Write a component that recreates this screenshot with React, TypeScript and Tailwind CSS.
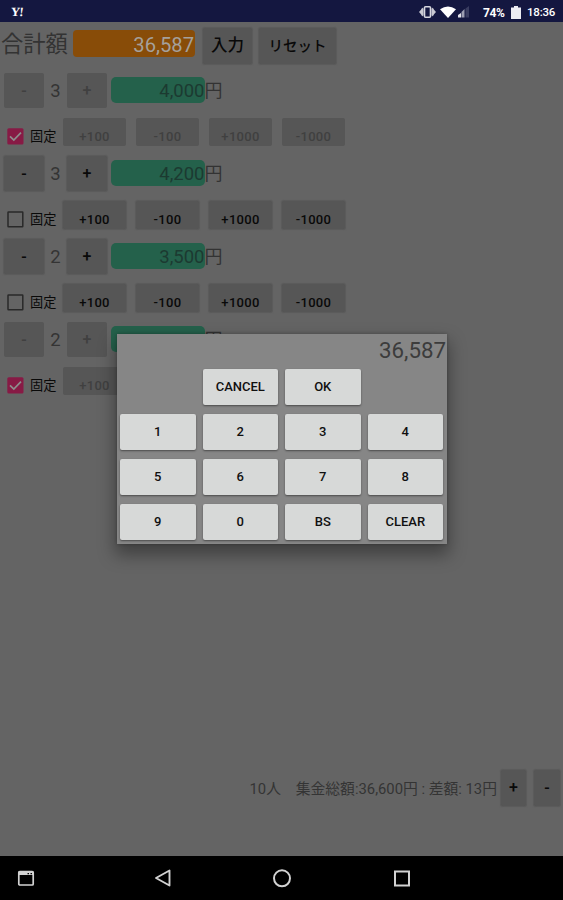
import React from 'react';
import clsx from 'clsx';

const steps = ['+100', '-100', '+1000', '-1000'];

const members = [
  { id: 1, count: 3, amount: '4,000', fixed: true, steps },
  { id: 2, count: 3, amount: '4,200', fixed: false, steps },
  { id: 3, count: 2, amount: '3,500', fixed: false, steps },
  { id: 4, count: 2, amount: '', fixed: true, steps: ['+100'] },
];

const keys = ['', 'CANCEL', 'OK', '', '1', '2', '3', '4', '5', '6', '7', '8', '9', '0', 'BS', 'CLEAR'];

function StatusBar() {
  return (
    <header className="flex h-[22px] shrink-0 items-center bg-[#141740] pl-[11px] pr-[7px] text-white">
      <span className="w-[16px] -skew-x-6 pt-[2px] font-['Liberation_Serif',serif] text-[12.5px] leading-none font-bold tracking-[-0.5px]">Y!</span>
      <svg className="ml-auto mt-[2px]" width="50" height="14" viewBox="0 0 50 14">
        <path d="M0 7l4-4.500v9zM17 7l-4-4.500v9z" fill="#c9c9d2" />
        <path d="M2.500 3.500h2v7h-2zM12.500 3.500h2v7h-2z" fill="#c9c9d2" />
        <rect x="5.500" y="1.800" width="6" height="10.400" rx="1" fill="none" stroke="#d8d8e0" strokeWidth="1.600" />
        <path d="M21 4.200Q29 -1 37 4.200L29 13z" fill="#fff" />
        <path d="M39 12.500V10l3-2v4.500z" fill="#e3e3ea" />
        <path d="M42.500 12.500V7l3-3v8.500z" fill="#9c9eb2" />
        <path d="M46.500 12.500V3.500L50 1v11.500z" fill="#393c60" />
      </svg>
      <span className="ml-[14px] mt-[3px] w-[23px] text-[12px] leading-none font-bold tracking-[-0.4px]">74%</span>
      <svg className="ml-[5px] mt-[2px]" width="10" height="13" viewBox="0 0 10 13">
        <path d="M3 0h4v1.500h3V13H0V1.500h3z" fill="#ececf2" />
      </svg>
      <span className="ml-[6px] mt-[3px] w-[29px] text-[11.500px] leading-none font-medium tracking-[-0.2px]">18:36</span>
    </header>
  );
}

function GrayButton({ className, disabled, children }: { className?: string; disabled?: boolean; children: React.ReactNode }) {
  return (
    <button
      disabled={disabled}
      className={clsx(
        'flex shrink-0 items-center justify-center rounded-[2px] bg-[#565656] font-medium',
        disabled ? 'text-[#404040]' : 'text-[#090909] shadow-[0_0_1px_0.5px_#5a5a5a]',
        className
      )}
    >
      {children}
    </button>
  );
}

function Checkbox({ checked }: { checked: boolean }) {
  return (
    <svg className="shrink-0" width="17" height="17" viewBox="0 0 17 17">
      {checked ? (
        <>
          <rect x="0.300" y="0.300" width="16.200" height="16.200" rx="1.500" fill="#871a45" />
          <path d="M3 8.300l3.800 3.800 7.200-7.400" fill="none" stroke="#8d8d8d" strokeWidth="1.700" />
        </>
      ) : (
        <rect x="1" y="1" width="14.800" height="14.800" rx="0.500" fill="none" stroke="#292929" strokeWidth="1.500" />
      )}
    </svg>
  );
}

function MemberRow({ count, amount, fixed, steps }: { count: number; amount: string; fixed: boolean; steps: string[] }) {
  return (
    <div className="h-[83px] shrink-0 pt-[5px]">
      <div className="flex h-[35px] items-center pl-[4px]">
        <GrayButton disabled={fixed} className="h-[35px] w-[40px] text-[16px]">-</GrayButton>
        <span className="w-[23px] pt-[2px] text-center text-[18.5px] leading-none text-[#343434]">{count}</span>
        <GrayButton disabled={fixed} className="h-[35px] w-[40px] pt-[1px] text-[16px]">+</GrayButton>
        <span className="mb-[1px] ml-[4px] flex h-[26px] w-[93.5px] items-center justify-end rounded-[5px] bg-[#24614b] pt-[3px] text-[18.5px] leading-none text-[#1c3a31]">
          {amount}
        </span>
        <span className="text-[18px] leading-none text-[#333]">円</span>
      </div>
      <div className="mt-[10px] flex h-[28px] pl-[7px]">
        <div className="flex w-[56px] items-center gap-[6px] pt-[8px]">
          <Checkbox checked={fixed} />
          <span className="pt-[1px] text-[13.200px] leading-none whitespace-nowrap text-[#090909]">固定</span>
        </div>
        <div className="flex gap-[10px]">
          {steps.map((step) => (
            <GrayButton key={step} disabled={fixed} className="h-[28px] w-[63px] pt-[9px] text-[13px] leading-none tracking-[0.3px]">
              {step}
            </GrayButton>
          ))}
        </div>
      </div>
    </div>
  );
}

function KeypadDialog() {
  return (
    <div className="absolute top-[334px] left-[117px] h-[210px] w-[330px] bg-[#868686] pr-[4px] pl-[3px] shadow-[0_9px_16px_2px_rgba(0,0,0,0.36),0_0_3px_rgba(0,0,0,0.25)]">
      <div className="-mr-[3px] flex h-[34px] items-center justify-end pb-[2px] text-[22.300px] leading-none text-[#3c3c3c]">36,587</div>
      <div className="grid grid-cols-4 gap-x-[7px] gap-y-[9px] pt-[0.5px]">
        {keys.map((key, i) =>
          key ? (
            <button
              key={i}
              className="flex h-[36px] items-center justify-center rounded-[2px] bg-[#d7d9d8] pb-[1px] text-[13px] leading-none font-medium text-[#101010] shadow-[0_1px_2px_rgba(0,0,0,0.45)]"
            >
              {key}
            </button>
          ) : (
            <span key={i} />
          )
        )}
      </div>
    </div>
  );
}

function NavBar() {
  return (
    <nav className="flex h-[44px] shrink-0 items-center bg-black text-[#d2d2d2]">
      <svg className="ml-[17px]" width="18" height="18" viewBox="0 0 18 18">
        <rect x="1.800" y="2.500" width="14.400" height="13.500" rx="1" fill="none" stroke="currentColor" strokeWidth="1.700" />
        <path d="M1.500 2.500h15V6h-15z" fill="currentColor" />
        <path d="M10.500 4.700h1.500M13.500 4.700H15" stroke="#000" strokeWidth="1.200" />
      </svg>
      <svg className="ml-[118px]" width="20" height="20" viewBox="0 0 20 20">
        <path d="M16.500 2.500v15L3 10z" fill="none" stroke="currentColor" strokeWidth="1.900" strokeLinejoin="round" />
      </svg>
      <svg className="ml-[99px]" width="20" height="20" viewBox="0 0 20 20">
        <circle cx="10" cy="10.300" r="8" fill="none" stroke="currentColor" strokeWidth="2" />
      </svg>
      <svg className="ml-[100px]" width="20" height="20" viewBox="0 0 20 20">
        <rect x="3" y="3.500" width="14" height="14" fill="none" stroke="currentColor" strokeWidth="2" />
      </svg>
    </nav>
  );
}

export default function App() {
  return (
    <div className="relative flex h-[900px] w-[563px] flex-col overflow-hidden bg-[#646464] font-['Roboto','Noto_Sans_CJK_JP',sans-serif]">
      <StatusBar />

      <div className="flex h-[46px] shrink-0 items-start pt-[6px] pl-[1px]">
        <h1 className="w-[72px] pt-[5px] text-[22.300px] leading-[22px] whitespace-nowrap text-[#333]">合計額</h1>
        <span className="mt-[2px] flex h-[27px] w-[122px] items-center justify-end rounded-[4px] bg-[#884c08] pt-[3px] pr-[1px] text-[20.200px] leading-none text-[#a5a09b]">
          36,587
        </span>
        <GrayButton className="ml-[8px] h-[36px] w-[49px] text-[16.500px]">入力</GrayButton>
        <GrayButton className="ml-[7px] h-[36px] w-[77px] pt-[1px] text-[14.500px]">リセット</GrayButton>
      </div>

      <main className="flex flex-1 flex-col">
        {members.map((member) => (
          <MemberRow key={member.id} count={member.count} amount={member.amount} fixed={member.fixed} steps={member.steps} />
        ))}
      </main>

      {/* Totals */}
      <footer className="flex h-[86px] shrink-0 items-start justify-end pr-[3px]">
        <p className="mt-[10px] mr-[4px] text-[14.800px] leading-[18px] whitespace-pre text-[#343434]">
          10人　集金総額:36,600円 : 差額: 13円
        </p>
        <GrayButton className="h-[36px] w-[25px] text-[16px]">+</GrayButton>
        <GrayButton className="ml-[8px] h-[36px] w-[26px] text-[16px]">-</GrayButton>
      </footer>

      <NavBar />
      <KeypadDialog />
    </div>
  );
}
